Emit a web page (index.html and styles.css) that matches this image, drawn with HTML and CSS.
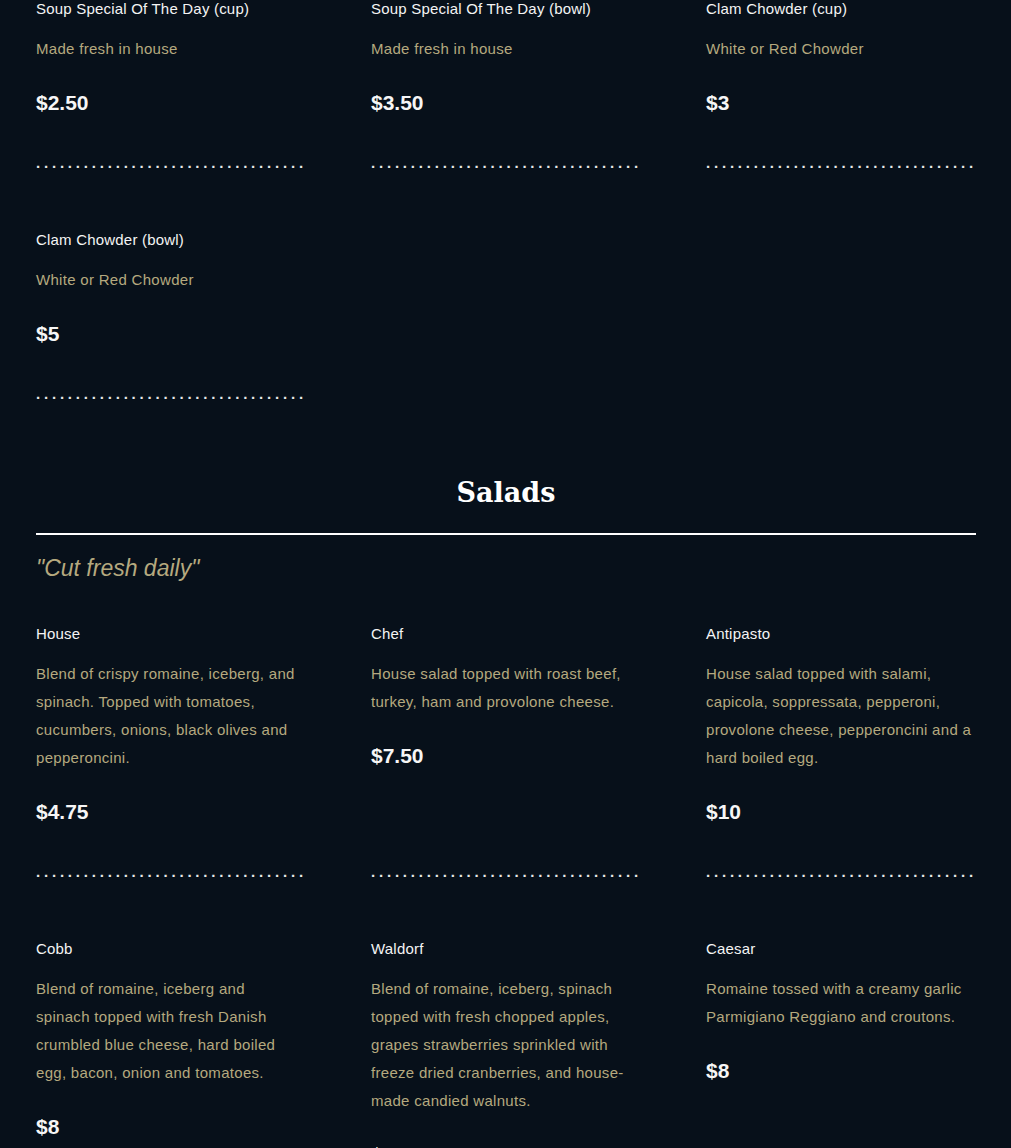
FILE: index.html
```html
<!DOCTYPE html>
<html>
<head>
<meta charset="utf-8">
<link rel="stylesheet" href="styles.css">
</head>
<body>
<main class="menu">
  <section class="section">
    <div class="grid">
      <div class="item">
        <h3 class="item-title">Soup Special Of The Day (cup)</h3>
        <p class="item-desc">Made fresh in house</p>
        <div class="item-price">$2.50</div>
        <div class="dots">..................................</div>
      </div>
      <div class="item">
        <h3 class="item-title">Soup Special Of The Day (bowl)</h3>
        <p class="item-desc">Made fresh in house</p>
        <div class="item-price">$3.50</div>
        <div class="dots">..................................</div>
      </div>
      <div class="item">
        <h3 class="item-title">Clam Chowder (cup)</h3>
        <p class="item-desc">White or Red Chowder</p>
        <div class="item-price">$3</div>
        <div class="dots">..................................</div>
      </div>
      <div class="item">
        <h3 class="item-title">Clam Chowder (bowl)</h3>
        <p class="item-desc">White or Red Chowder</p>
        <div class="item-price">$5</div>
        <div class="dots">..................................</div>
      </div>
    </div>
  </section>

  <section class="section salads">
    <h2 class="section-title">Salads</h2>
    <p class="tagline">"Cut fresh daily"</p>
    <div class="grid">
      <div class="item">
        <h3 class="item-title">House</h3>
        <p class="item-desc">Blend of crispy romaine, iceberg, and spinach. Topped with tomatoes, cucumbers, onions, black olives and pepperoncini.</p>
        <div class="item-price">$4.75</div>
        <div class="dots">..................................</div>
      </div>
      <div class="item">
        <h3 class="item-title">Chef</h3>
        <p class="item-desc">House salad topped with roast beef, turkey, ham and provolone cheese.</p>
        <div class="item-price">$7.50</div>
        <div class="dots">..................................</div>
      </div>
      <div class="item">
        <h3 class="item-title">Antipasto</h3>
        <p class="item-desc">House salad topped with salami, capicola, soppressata, pepperoni, provolone cheese, pepperoncini and a hard boiled egg.</p>
        <div class="item-price">$10</div>
        <div class="dots">..................................</div>
      </div>
      <div class="item">
        <h3 class="item-title">Cobb</h3>
        <p class="item-desc">Blend of romaine, iceberg and spinach topped with fresh Danish crumbled blue cheese, hard boiled egg, bacon, onion and tomatoes.</p>
        <div class="item-price">$8</div>
        <div class="dots">..................................</div>
      </div>
      <div class="item">
        <h3 class="item-title">Waldorf</h3>
        <p class="item-desc">Blend of romaine, iceberg, spinach topped with fresh chopped apples, grapes strawberries sprinkled with freeze dried cranberries, and house-made candied walnuts.</p>
        <div class="item-price">$9</div>
        <div class="dots">..................................</div>
      </div>
      <div class="item">
        <h3 class="item-title">Caesar</h3>
        <p class="item-desc">Romaine tossed with a creamy garlic Parmigiano Reggiano and croutons.</p>
        <div class="item-price">$8</div>
        <div class="dots">..................................</div>
      </div>
    </div>
  </section>
</main>
</body>
</html>
```

FILE: styles.css
```css
html, body {
  margin: 0;
  padding: 0;
  background: #07101a;
}
body {
  font-family: "Liberation Sans", Arial, sans-serif;
  color: #f2f2f2;
}
.menu {
  padding: 0 35px 0 36px;
}
.grid {
  display: grid;
  grid-template-columns: repeat(3, 270px);
  column-gap: 65px;
  row-gap: 59px;
}
.item {
  display: flex;
  flex-direction: column;
}
.item-title {
  margin: 0;
  font-size: 15px;
  line-height: 18px;
  font-weight: 400;
  letter-spacing: 0.2px;
  color: #f4f4f4;
}
.item-desc {
  margin: 17px 0 0;
  padding-right: 4px;
  font-size: 15px;
  line-height: 28px;
  letter-spacing: 0.3px;
  color: #b5a97f;
}
.item-price {
  margin-top: 28px;
  font-size: 21px;
  line-height: 24px;
  font-weight: 700;
  color: #f6f6f6;
}
.dots {
  margin-top: auto;
  padding-top: 39px;
  font-size: 15px;
  line-height: 18px;
  letter-spacing: 3.8px;
  font-weight: 700;
  color: #e8e8e8;
  white-space: nowrap;
}
.salads {
  margin-top: 70px;
}
.section-title {
  margin: 0;
  padding-bottom: 20px;
  border-bottom: 2px solid #ffffff;
  text-align: center;
  font-family: "DejaVu Serif", serif;
  font-size: 27px;
  line-height: 40px;
  font-weight: 700;
  color: #ffffff;
}
.tagline {
  margin: 19px 0 43px;
  font-size: 23px;
  line-height: 28px;
  font-style: italic;
  color: #b5a97f;
}
```
